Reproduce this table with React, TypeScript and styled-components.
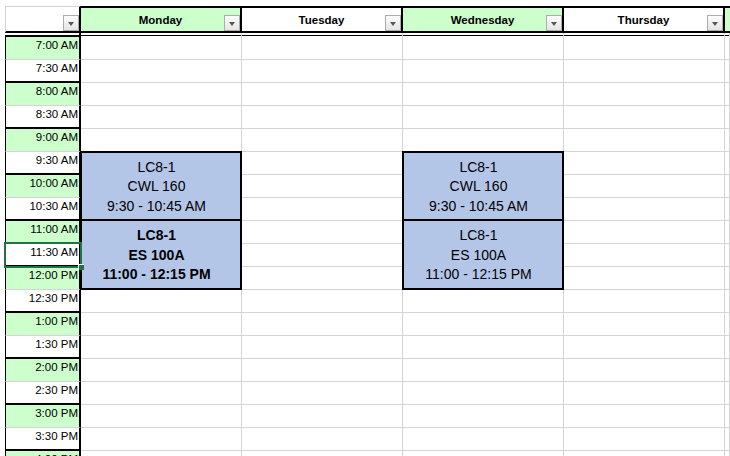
import React from 'react';
import styled, { createGlobalStyle } from 'styled-components';

const GRID = '#d4d4d4';
const GREEN = '#ccffcc';
const BLUE = '#b4c6e7';
const SELECT = '#217346';
const FONT = '"Liberation Sans", Arial, Helvetica, sans-serif';

const Global = createGlobalStyle`
  html, body {
    margin: 0;
    padding: 0;
    background: #fff;
    overflow: hidden;
    height: 456px;
  }
  body {
    font-family: ${FONT};
    color: #000;
  }
`;

const Sheet = styled.div`
  display: grid;
  grid-template-columns: 5px 76px repeat(4, 161px) 1fr;
  grid-template-rows: 6px 27px 4px;
  grid-auto-rows: 23px;
  width: 730px;
  height: 456px;
  overflow: hidden;
  & > * {
    box-sizing: border-box;
    min-width: 0;
    min-height: 0;
  }
`;

const FilterButton = styled.span`
  position: absolute;
  right: 0;
  bottom: 0;
  width: 16px;
  height: 16px;
  box-sizing: border-box;
  border: 1px solid #acacac;
  background: linear-gradient(#fdfdfd, #e4e4e4);
  display: flex;
  align-items: center;
  justify-content: center;
  &::after {
    content: '';
    margin-top: 1px;
    border-left: 3px solid transparent;
    border-right: 3px solid transparent;
    border-top: 4px solid #575757;
  }
`;

const CornerHeader = styled.div`
  grid-row: 2;
  grid-column: 2;
  position: relative;
  border-top: 1px solid ${GRID};
  border-left: 1px solid ${GRID};
  border-right: 2px solid #000;
  border-bottom: 2px solid #000;
`;

const DayHeader = styled.div<{ $col: number; $green: boolean; $edge?: boolean }>`
  grid-row: 2;
  grid-column: ${(p) => p.$col};
  position: relative;
  background: ${(p) => (p.$green ? GREEN : '#fff')};
  border-top: 2px solid #000;
  border-bottom: 2px solid #000;
  border-right: ${(p) => (p.$edge ? 'none' : '2px solid #000')};
  display: flex;
  align-items: center;
  justify-content: center;
  font-size: 11.5px;
  font-weight: bold;
  padding-top: 1px;
`;

const Rule = styled.div<{ $col: number; $thick?: boolean }>`
  grid-row: 3;
  grid-column: ${(p) => p.$col};
  background: ${(p) =>
    p.$thick
      ? 'linear-gradient(to bottom, transparent 2px, #000 2px)'
      : 'linear-gradient(to bottom, transparent 2px, #000 2px, #000 3px, transparent 3px)'};
  border-right: ${(p) => (p.$thick ? '2px solid #000' : `1px solid ${GRID}`)};
`;

const TimeCell = styled.div<{ $row: number; $hour: boolean; $selected?: boolean }>`
  grid-row: ${(p) => p.$row};
  grid-column: 2;
  position: relative;
  background: ${(p) => (p.$hour ? GREEN : '#fff')};
  border-left: 1px solid #000;
  border-right: 2px solid #000;
  border-bottom: ${(p) => (p.$hour ? `1px solid ${GRID}` : '2px solid #000')};
  font-size: 11.5px;
  line-height: 14px;
  text-align: right;
  padding: 1px 1px 0 0;
  white-space: nowrap;
  ${(p) =>
    p.$selected &&
    `
    &::after {
      content: '';
      position: absolute;
      top: -2px;
      left: -2px;
      right: -3px;
      bottom: -3px;
      border: 2px solid ${SELECT};
      z-index: 3;
    }
    &::before {
      content: '';
      position: absolute;
      right: -5px;
      bottom: -5px;
      width: 5px;
      height: 5px;
      background: ${SELECT};
      border-left: 1px solid #fff;
      border-top: 1px solid #fff;
      z-index: 4;
    }
  `}
`;

const Cell = styled.div<{ $row: number; $col: number }>`
  grid-row: ${(p) => p.$row};
  grid-column: ${(p) => p.$col};
  border-right: 1px solid ${GRID};
  border-bottom: 1px solid ${GRID};
`;

const ClassBlock = styled.div<{ $row: number; $col: number; $bold?: boolean; $joined?: boolean }>`
  grid-row: ${(p) => p.$row} / span 3;
  grid-column: ${(p) => p.$col};
  margin: ${(p) => (p.$joined ? '-2px' : '-1px')} 0 0 -1px;
  z-index: 1;
  background: ${BLUE};
  border: 2px solid #000;
  display: flex;
  flex-direction: column;
  align-items: center;
  justify-content: center;
  padding: 2px 9px 0 0;
  font-size: 14px;
  line-height: 19.5px;
  font-weight: ${(p) => (p.$bold ? 700 : 400)};
  white-space: nowrap;
`;

const days = [
  { name: 'Monday', green: true },
  { name: 'Tuesday', green: false },
  { name: 'Wednesday', green: true },
  { name: 'Thursday', green: false },
];

const ROW0 = 4;
const times = Array.from({ length: 19 }, (_, i) => {
  const hour = 7 + Math.floor(i / 2);
  const half = i % 2 === 1;
  const h12 = hour > 12 ? hour - 12 : hour;
  return {
    label: `${h12}:${half ? '30' : '00'} ${hour < 12 ? 'AM' : 'PM'}`,
    hour: !half,
  };
});

type ClassInfo = { col: number; start: number; lines: string[]; bold?: boolean; joined?: boolean };

const classes: ClassInfo[] = [
  { col: 3, start: 5, lines: ['LC8-1', 'CWL 160', '9:30 - 10:45 AM'] },
  { col: 3, start: 8, lines: ['LC8-1', 'ES 100A', '11:00 - 12:15 PM'], bold: true, joined: true },
  { col: 5, start: 5, lines: ['LC8-1', 'CWL 160', '9:30 - 10:45 AM'] },
  { col: 5, start: 8, lines: ['LC8-1', 'ES 100A', '11:00 - 12:15 PM'], joined: true },
];

const covered = (i: number, col: number) =>
  classes.some((c) => c.col === col && i >= c.start && i < c.start + 3);

export default function App() {
  return (
    <>
      <Global />
      <Sheet>
        <CornerHeader>
          <FilterButton />
        </CornerHeader>
        {days.map((d, k) => (
          <DayHeader key={d.name} $col={3 + k} $green={d.green}>
            {d.name}
            <FilterButton />
          </DayHeader>
        ))}
        <DayHeader $col={7} $green $edge />

        <Rule $col={2} $thick />
        {[3, 4, 5, 6, 7].map((c) => (
          <Rule key={c} $col={c} />
        ))}

        {times.map((t, i) => (
          <React.Fragment key={t.label}>
            <TimeCell $row={ROW0 + i} $hour={t.hour} $selected={i === 9}>
              {t.label}
            </TimeCell>
            {[3, 4, 5, 6, 7]
              .filter((c) => !covered(i, c))
              .map((c) => (
                <Cell key={c} $row={ROW0 + i} $col={c} />
              ))}
          </React.Fragment>
        ))}

        {classes.map((c) => (
          <ClassBlock
            key={`${c.col}-${c.start}`}
            $row={ROW0 + c.start}
            $col={c.col}
            $bold={c.bold}
            $joined={c.joined}
          >
            {c.lines.map((l) => (
              <div key={l}>{l}</div>
            ))}
          </ClassBlock>
        ))}
      </Sheet>
    </>
  );
}
